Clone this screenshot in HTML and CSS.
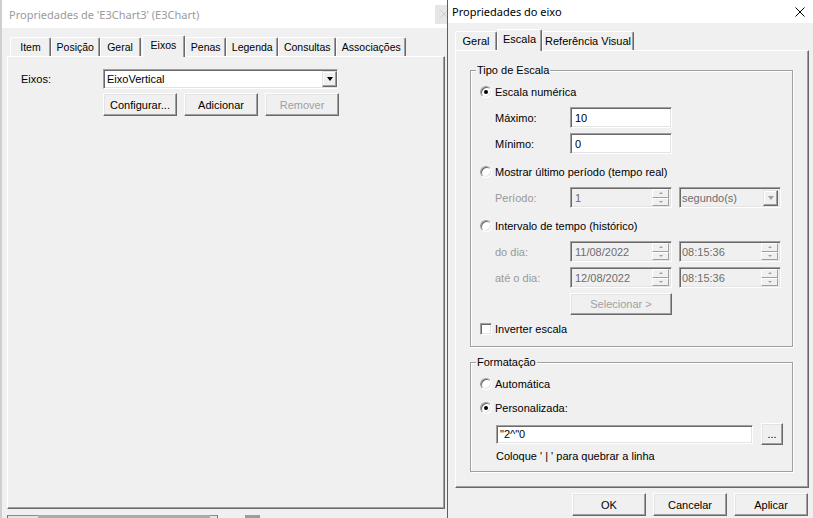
FILE: index.html
```html
<!doctype html>
<html lang="pt-br">
	<head>
		<meta charset="UTF-8">
		<title>Propriedades do eixo</title>
		<link rel="stylesheet" href="styles.css">
	</head>
	<body>
		<div class="win win-back">
			<div class="titlebar">
				<span class="title">Propriedades de 'E3Chart3' (E3Chart)</span>
				<span class="close-back"><svg width="10" height="10" viewBox="0 0 10 10"><path d="M0.5 0.5L9.5 9.5M9.5 0.5L0.5 9.5" stroke="#cdcdcd" stroke-width="1"/></svg></span>
			</div>
			<ul class="tabs">
				<li class="tab">Item</li>
				<li class="tab">Posição</li>
				<li class="tab">Geral</li>
				<li class="tab on">Eixos</li>
				<li class="tab">Penas</li>
				<li class="tab">Legenda</li>
				<li class="tab">Consultas</li>
				<li class="tab">Associações</li>
			</ul>
			<div class="panel">
				<div class="axis-row">
					<span class="axis-lbl">Eixos:</span>
					<div class="combo">
						<span class="val">EixoVertical</span>
						<span class="drop"><i class="tri"></i></span>
					</div>
				</div>
				<div class="axis-btns">
					<button class="btn">Configurar...</button>
					<button class="btn">Adicionar</button>
					<button class="btn" disabled>Remover</button>
				</div>
			</div>
			<div class="back-foot">
				<span class="edge-l"></span><span class="bar"></span><span class="edge-r"></span><span class="stub"></span>
			</div>
		</div>

		<div class="win win-front">
			<div class="titlebar">
				<span class="title">Propriedades do eixo</span>
				<span class="close"><svg width="10" height="10" viewBox="0 0 10 10"><path d="M0.5 0.5L9.5 9.5M9.5 0.5L0.5 9.5" stroke="#000" stroke-width="1"/></svg></span>
			</div>
			<ul class="tabs">
				<li class="tab">Geral</li>
				<li class="tab on">Escala</li>
				<li class="tab">Referência Visual</li>
			</ul>
			<div class="panel">
				<fieldset class="group">
					<legend>Tipo de Escala</legend>
					<div class="opt"><span class="radio on"></span>Escala numérica</div>
					<div class="field">
						<span class="lbl">Máximo:</span>
						<div class="edit">10</div>
					</div>
					<div class="field">
						<span class="lbl">Mínimo:</span>
						<div class="edit">0</div>
					</div>
					<div class="opt"><span class="radio"></span>Mostrar último período (tempo real)</div>
					<div class="field off">
						<span class="lbl">Período:</span>
						<div class="edit">1<span class="spin"><b><i class="up"></i></b><b><i class="dn"></i></b></span></div>
						<div class="edit narrow">segundo(s)<span class="drop"><i class="tri"></i></span></div>
					</div>
					<div class="opt"><span class="radio"></span>Intervalo de tempo (histórico)</div>
					<div class="field off">
						<span class="lbl">do dia:</span>
						<div class="edit">11/08/2022<span class="spin"><b><i class="up"></i></b><b><i class="dn"></i></b></span></div>
						<div class="edit narrow">08:15:36<span class="spin"><b><i class="up"></i></b><b><i class="dn"></i></b></span></div>
					</div>
					<div class="field off">
						<span class="lbl">até o dia:</span>
						<div class="edit">12/08/2022<span class="spin"><b><i class="up"></i></b><b><i class="dn"></i></b></span></div>
						<div class="edit narrow">08:15:36<span class="spin"><b><i class="up"></i></b><b><i class="dn"></i></b></span></div>
					</div>
					<div class="act"><button class="btn wide" disabled>Selecionar &gt;</button></div>
					<div class="opt"><span class="check"></span>Inverter escala</div>
				</fieldset>
				<fieldset class="group">
					<legend>Formatação</legend>
					<div class="opt"><span class="radio"></span>Automática</div>
					<div class="opt tight"><span class="radio on"></span>Personalizada:</div>
					<div class="fmt">
						<div class="edit long">"2^"0</div>
						<button class="btn dots">...</button>
					</div>
					<div class="hint">Coloque ' | ' para quebrar a linha</div>
				</fieldset>
			</div>
			<div class="footer">
				<button class="btn">OK</button>
				<button class="btn">Cancelar</button>
				<button class="btn">Aplicar</button>
			</div>
		</div>
	</body>
</html>
```

FILE: styles.css
```css
html,body,ul,li,fieldset,legend,button {
	margin: 0;
	padding: 0;
}
ul {
	list-style: none;
}
body {
	width: 813px;
	height: 518px;
	overflow: hidden;
	position: relative;
	background: #f0f0f0;
	font-family: "Liberation Sans", Arial, sans-serif;
	font-size: 11px;
	color: #000;
}
button {
	font: inherit;
	color: inherit;
}

/* janelas */
.win {
	position: absolute;
	top: 0;
	height: 540px;
	box-sizing: border-box;
	background: #f0f0f0;
}
.win-back {
	left: 0;
	width: 455px;
	border-left: 2px solid #cfcfcf;
}
.win-front {
	left: 447px;
	width: 369px;
	border-left: 1px solid #5e5e5e;
	z-index: 2;
}
.titlebar {
	display: flex;
	align-items: center;
	background: #fff;
	font-family: "Noto Sans", sans-serif;
	font-size: 11px;
	white-space: nowrap;
}
.win-back .titlebar {
	height: 28px;
	padding-left: 7px;
	color: #9a9a9a;
}
.win-front .titlebar {
	height: 23px;
	padding-left: 4px;
}
.title {
	flex: 1;
}
.close-back {
	width: 20px;
	height: 19px;
	background: #e6e6e6;
	display: flex;
	align-items: center;
	padding-left: 4px;
	box-sizing: border-box;
}
.close {
	width: 32px;
	display: flex;
	justify-content: center;
}
.close svg, .close-back svg {
	display: block;
}

/* abas */
.tabs {
	display: flex;
	align-items: flex-end;
	height: 21px;
}
.win-back .tabs {
	margin: 7px 0 0 5px;
	padding-left: 3px;
	font-size: 10.5px;
}
.win-front .tabs {
	margin: 6px 0 0 7px;
}
.tab {
	box-sizing: border-box;
	height: 19px;
	min-width: 41px;
	padding: 0 4.6px;
	border: 1px solid #fff;
	border-right-color: #696969;
	border-bottom: 0;
	border-radius: 2px 2px 0 0;
	box-shadow: inset -1px 0 0 #a0a0a0;
	line-height: 18px;
	text-align: center;
	white-space: nowrap;
}
.win-front .tab {
	min-width: 42px;
	padding: 0 2px;
}
.tab.on {
	position: relative;
	z-index: 1;
	height: 22px;
	margin: 0 0 -1px 1px;
	padding: 0 8px 2px;
	background: #f0f0f0;
	line-height: 19px;
}
.win-front .tab.on {
	margin-left: 0;
	padding: 0 5px 2px;
}

/* painel */
.panel {
	box-sizing: border-box;
	border: 1px solid;
	border-color: #fff #696969 #696969 #fff;
	box-shadow: inset -1px -1px 0 #a0a0a0;
}
.win-back .panel {
	width: 438px;
	height: 453px;
	margin-left: 5px;
	padding: 12px 0 0 13px;
}
.win-front .panel {
	width: 354px;
	height: 438px;
	margin-left: 7px;
	padding: 12px 0 0 14px;
}

/* restos dos botões da janela de trás */
.back-foot {
	display: flex;
	height: 4px;
	margin: 6px 0 0 5px;
}
.back-foot span {
	box-sizing: border-box;
	height: 4px;
}
.edge-l {
	width: 31px;
	border-left: 1px solid #6f6f6f;
	border-top: 1px solid #8a8a8a;
	background: #e4e4e4;
}
.bar {
	width: 172px;
	background: #ababab;
}
.edge-r {
	width: 8px;
	border-right: 1px solid #6f6f6f;
	border-top: 1px solid #8a8a8a;
	background: #e4e4e4;
}
.stub {
	width: 15px;
	margin-left: 27px;
	background: #9c9c9c;
}

/* controles */
.btn {
	box-sizing: border-box;
	width: 74px;
	height: 23px;
	background: #f0f0f0;
	border: 1px solid;
	border-color: #fff #696969 #696969 #fff;
	box-shadow: inset -1px -1px 0 #a0a0a0, inset 1px 1px 0 #e3e3e3;
	text-align: center;
	white-space: nowrap;
}
.btn:disabled {
	color: #a0a0a0;
}
.edit, .combo {
	box-sizing: border-box;
	display: flex;
	align-items: center;
	background: #fff;
	border: 1px solid;
	border-color: #a0a0a0 #fff #fff #a0a0a0;
	box-shadow: inset 1px 1px 0 #696969, inset -1px -1px 0 #e3e3e3;
	white-space: nowrap;
}
.edit {
	width: 102px;
	height: 21px;
	padding: 0 2px 0 4px;
}
.edit.narrow {
	padding-left: 2px;
	margin-left: 7px;
}
.combo {
	width: 235px;
	height: 20px;
	padding-left: 3px;
}
.val {
	flex: 1;
}
.drop {
	margin-left: auto;
	box-sizing: border-box;
	width: 15px;
	height: 16px;
	display: flex;
	align-items: center;
	justify-content: center;
	background: #f0f0f0;
	border: 1px solid;
	border-color: #e3e3e3 #696969 #696969 #e3e3e3;
	box-shadow: inset -1px -1px 0 #a0a0a0, inset 1px 1px 0 #fff;
}
.tri {
	width: 0;
	height: 0;
	border-left: 3.5px solid transparent;
	border-right: 3.5px solid transparent;
	border-top: 4px solid #000;
}
.spin {
	margin-left: auto;
	width: 17px;
	height: 17px;
	display: flex;
	flex-direction: column;
}
.spin b {
	flex: 1;
	box-sizing: border-box;
	display: flex;
	align-items: center;
	justify-content: center;
	background: #f0f0f0;
	border: 1px solid;
	border-color: #fff #a0a0a0 #a0a0a0 #fff;
}
.spin .up, .spin .dn {
	width: 0;
	height: 0;
	border-left: 2px solid transparent;
	border-right: 2px solid transparent;
}
.spin .up {
	border-bottom: 2px solid #a0a0a0;
}
.spin .dn {
	border-top: 2px solid #a0a0a0;
}

/* janela de trás */
.axis-row {
	display: flex;
	align-items: center;
	height: 20px;
}
.axis-lbl {
	width: 82px;
}
.axis-btns {
	display: flex;
	gap: 7px;
	margin: 4px 0 0 82px;
}

/* grupos */
.group {
	box-sizing: border-box;
	width: 323px;
	min-width: 0;
	padding: 6px 0 8px;
	border: 1px solid #a0a0a0;
	box-shadow: 1px 1px 0 #fff, inset 1px 1px 0 #fff;
}
.group + .group {
	margin-top: 8px;
}
.group legend {
	margin-left: 5px;
	padding: 0 1px;
	line-height: 14px;
	background: #f0f0f0;
}
.opt {
	display: flex;
	align-items: center;
	height: 18px;
	padding-left: 9px;
	margin-top: 9px;
}
legend + .opt {
	margin-top: 0;
}
.opt.tight {
	margin-top: 6px;
}
.radio {
	position: relative;
	flex: none;
	box-sizing: border-box;
	width: 12px;
	height: 12px;
	margin-right: 3px;
	border-radius: 50%;
	background: #fff;
	border: 1px solid;
	border-color: #a0a0a0 #fff #fff #a0a0a0;
	box-shadow: inset 1px 1px 0 #696969, inset -1px -1px 0 #e3e3e3;
}
.radio.on::after {
	content: "";
	position: absolute;
	left: 3px;
	top: 3px;
	width: 4px;
	height: 4px;
	border-radius: 50%;
	background: #000;
}
.check {
	flex: none;
	box-sizing: border-box;
	width: 12px;
	height: 12px;
	margin-right: 3px;
	background: #fff;
	border: 1px solid;
	border-color: #a0a0a0 #fff #fff #a0a0a0;
	box-shadow: inset 1px 1px 0 #696969, inset -1px -1px 0 #e3e3e3;
}
.field {
	display: flex;
	align-items: center;
	height: 21px;
	padding-left: 24px;
	margin-top: 5px;
}
.opt + .field {
	margin-top: 6px;
}
.lbl {
	width: 75px;
}
.field.off .lbl {
	color: #999;
}
.field.off .edit {
	background: #f0f0f0;
	color: #6d6d6d;
}
.field.off .tri {
	border-top-color: #a0a0a0;
}
.act {
	display: flex;
	height: 22px;
	padding-left: 99px;
	margin-top: 5px;
}
.btn.wide {
	width: 102px;
	height: 22px;
}
.act + .opt {
	margin-top: 5px;
}
.fmt {
	display: flex;
	align-items: center;
	gap: 8px;
	height: 22px;
	padding-left: 25px;
	margin-top: 6px;
}
.edit.long {
	width: 257px;
	height: 19px;
	padding-left: 3px;
}
.btn.dots {
	width: 22px;
	height: 22px;
}
.hint {
	height: 14px;
	line-height: 14px;
	padding-left: 25px;
	margin-top: 4px;
}

/* rodapé */
.footer {
	display: flex;
	justify-content: flex-end;
	gap: 7px;
	box-sizing: border-box;
	width: 354px;
	margin: 5px 0 0 7px;
	padding-right: 1px;
}
```
